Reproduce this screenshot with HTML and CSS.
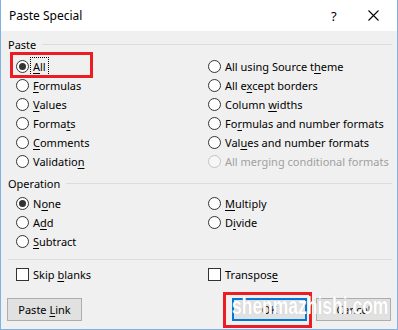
FILE: index.html
```html
<!DOCTYPE html>
<html>
<head>
<meta charset="utf-8">
<title>Paste Special</title>
<link rel="stylesheet" href="styles.css">
</head>
<body>
<div class="dialog">
  <div class="titlebar">
    <span class="title">Paste Special</span>
    <span class="help">?</span>
    <span class="close"><svg width="11" height="11" viewBox="0 0 11 11"><path d="M0.5 0.5L10.5 10.5M10.5 0.5L0.5 10.5" stroke="#000" stroke-width="1.1" fill="none"/></svg></span>
  </div>

  <div class="content">
    <div class="group-head"><span>Paste</span><i class="rule"></i></div>
    <div class="options">
      <label class="opt"><span class="radio on"></span><span class="focus"><u>A</u>ll</span></label>
      <label class="opt"><span class="radio"></span><span>All using Source t<u>h</u>eme</span></label>
      <label class="opt"><span class="radio"></span><span><u>F</u>ormulas</span></label>
      <label class="opt"><span class="radio"></span><span>All e<u>x</u>cept borders</span></label>
      <label class="opt"><span class="radio"></span><span><u>V</u>alues</span></label>
      <label class="opt"><span class="radio"></span><span>Column <u>w</u>idths</span></label>
      <label class="opt"><span class="radio"></span><span>Forma<u>t</u>s</span></label>
      <label class="opt"><span class="radio"></span><span>Fo<u>r</u>mulas and number formats</span></label>
      <label class="opt"><span class="radio"></span><span><u>C</u>omments</span></label>
      <label class="opt"><span class="radio"></span><span>Val<u>u</u>es and number formats</span></label>
      <label class="opt"><span class="radio"></span><span>Validatio<u>n</u></span></label>
      <label class="opt disabled"><span class="radio"></span><span>All merging conditional formats</span></label>
    </div>

    <div class="group-head op-head"><span>Operation</span><i class="rule"></i></div>
    <div class="options">
      <label class="opt"><span class="radio on"></span><span>N<u>o</u>ne</span></label>
      <label class="opt"><span class="radio"></span><span><u>M</u>ultiply</span></label>
      <label class="opt"><span class="radio"></span><span>A<u>d</u>d</span></label>
      <label class="opt"><span class="radio"></span><span>D<u>i</u>vide</span></label>
      <label class="opt"><span class="radio"></span><span><u>S</u>ubtract</span></label>
    </div>

    <div class="sep"></div>

    <div class="options checks">
      <label class="opt"><span class="check"></span><span>Skip <u>b</u>lanks</span></label>
      <label class="opt"><span class="check"></span><span>Transpos<u>e</u></span></label>
    </div>

    <div class="buttons">
      <button class="btn">Paste <u>L</u>ink</button>
      <button class="btn btn-default">OK</button>
      <button class="btn">Cancel</button>
    </div>
  </div>

  <div class="mark mark-all"></div>
  <div class="mark mark-ok"></div>
  <div class="watermark">shenmazhishi.com</div>
</div>
</body>
</html>
```

FILE: styles.css
```css
html, body { margin: 0; padding: 0; }
body {
  font-family: "Noto Sans", "Open Sans", sans-serif;
  font-size: 11px;
  color: #000;
  background: #f0f0f0;
}
u { text-decoration: underline; text-underline-offset: 2px; }

.dialog {
  position: relative;
  width: 398px; height: 330px;
  box-sizing: border-box;
  border: 1px solid #7fb0e6; border-top: none;
  background: #f0f0f0;
  overflow: hidden;
}

.titlebar {
  height: 31px;
  background: #fff;
  display: flex; align-items: center;
  padding-left: 8px;
  font-size: 12px;
}
.titlebar .title { flex: 1; }
.titlebar .help { width: 12px; margin-right: 25px; font-size: 13px; }
.titlebar .close { width: 11px; height: 11px; margin-right: 18px; margin-top: -1px; }
.titlebar .close svg { display: block; }

.content { padding: 5px 5px 0 6px; }

.group-head {
  display: flex; align-items: center;
  height: 17px;
  margin-left: 1px;
  margin-bottom: 4px;
}
.group-head .rule {
  flex: 1; height: 1px; background: #dcdcdc;
  margin-left: 6px;
}
.op-head { margin-top: 4px; margin-bottom: 2px; }

.options {
  display: grid;
  grid-template-columns: 192px 1fr;
  grid-auto-rows: 19px;
  padding-left: 9px;
}
.opt {
  display: flex; align-items: center;
  white-space: nowrap;
}
.radio, .check {
  width: 13px; height: 13px;
  box-sizing: border-box;
  border: 1px solid #333;
  background: #fff;
  margin-right: 4px;
  flex: none;
  position: relative;
}
.radio { border-radius: 50%; }
.radio.on::after {
  content: "";
  position: absolute; left: 2px; top: 2px;
  width: 7px; height: 7px; border-radius: 50%;
  background: #333;
}
.opt.disabled { color: #a0a0a0; }
.opt.disabled .radio { border-color: #c4c4c4; background: #f6f6f6; }
.focus { outline: 1px dotted #000; outline-offset: 1px; padding: 0 1px; margin-left: -1px; }

.sep { height: 1px; background: #dcdcdc; margin: 8px 0 0 1px; }
.checks { margin-top: 5px; }

.buttons {
  display: flex;
  margin-top: 14px;
  padding-right: 1px;
}
.btn {
  width: 75px; height: 23px;
  font: inherit; color: #000;
  background: #e1e1e1;
  border: 1px solid #adadad;
  padding: 0;
}
.btn-default { margin-left: auto; margin-right: 9px; border: 2px solid #0078d7; }

.mark { position: absolute; border: 3px solid #ec1c24; box-sizing: border-box; }
.mark-all { left: 9px; top: 52px; width: 83px; height: 26px; }
.mark-ok { left: 222px; top: 292px; width: 89px; height: 36px; }

.watermark {
  position: absolute; left: 231px; top: 293px;
  font-family: "Liberation Sans", sans-serif; font-weight: bold;
  font-size: 23px; color: #fff;
  transform: scaleX(0.76); transform-origin: 0 0;
  text-shadow: 0 0 1px #bbb;
  white-space: nowrap;
}
```
